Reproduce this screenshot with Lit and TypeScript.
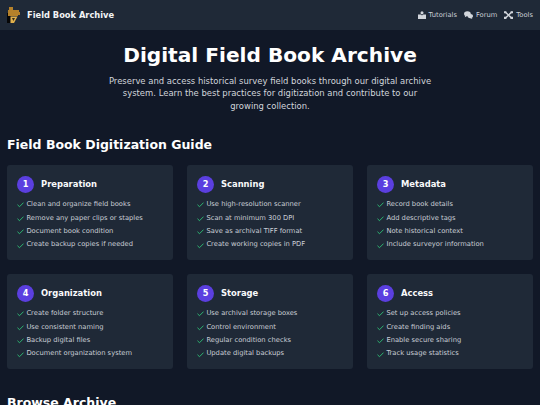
import { LitElement, html, css } from "lit";
import { customElement } from "lit/decorators.js";

const CARDS = [
  ["Preparation", ["Clean and organize field books", "Remove any paper clips or staples", "Document book condition", "Create backup copies if needed"]],
  ["Scanning", ["Use high-resolution scanner", "Scan at minimum 300 DPI", "Save as archival TIFF format", "Create working copies in PDF"]],
  ["Metadata", ["Record book details", "Add descriptive tags", "Note historical context", "Include surveyor information"]],
  ["Organization", ["Create folder structure", "Use consistent naming", "Backup digital files", "Document organization system"]],
  ["Storage", ["Use archival storage boxes", "Control environment", "Regular condition checks", "Update digital backups"]],
  ["Access", ["Set up access policies", "Create finding aids", "Enable secure sharing", "Track usage statistics"]],
] as [string, string[]][];

const check = html`<svg class="check" viewBox="0 0 12 12"><path d="M.8 6.4 4.3 9.8 11.2 2.8" fill="none" stroke="#2fb673" stroke-width="1.7"/></svg>`;

@customElement("app-root")
export class AppRoot extends LitElement {
  static styles = css`
    :host { display: block; height: 405px; overflow: hidden; background: #111827; color: #fff; font-family: "DejaVu Sans", sans-serif; }
    nav { height: 30px; background: #1f2937; display: flex; align-items: center; justify-content: space-between; padding: 0 7px; }
    .brand { display: flex; align-items: center; gap: 6px; font-size: 8.3px; font-weight: 700; color: #f3f4f6; }
    .logo { width: 14px; height: 16px; display: block; }
    .links { display: flex; gap: 7px; font-size: 6.75px; color: #c9ced6; }
    .link { display: flex; align-items: center; gap: 3px; }
    .link svg { width: 9px; height: 8px; display: block; }
    .link.t svg { width: 8px; }
    .hero { padding: 11px 7px 0; text-align: center; }
    h1 { margin: 0; font-size: 20.15px; line-height: 28px; font-weight: 700; }
    .sub { width: 328px; margin: 6px auto 0; font-size: 8.45px; line-height: 12.4px; color: #d1d5db; }
    h2 { margin: 24px 7px 0; font-size: 12.5px; line-height: 18px; font-weight: 700; }
    .grid { margin: 11px 7px 0; display: grid; grid-template-columns: repeat(3, 1fr); gap: 14px; }
    .card { background: #1f2937; border-radius: 3px; padding: 10.5px 10px 0; height: 95px; box-sizing: border-box; }
    .head { display: flex; align-items: center; gap: 7px; margin-bottom: 5.5px; }
    .num { width: 17px; height: 17px; border-radius: 50%; background: #5b3fe0; display: flex; align-items: center; justify-content: center; font-size: 8.25px; font-weight: 700; }
    .title { font-size: 8.4px; font-weight: 700; color: #f9fafb; }
    ul { list-style: none; margin: 0; padding: 0; }
    li { display: flex; align-items: center; gap: 2.4px; font-size: 6.75px; line-height: 13.4px; color: #c9ced6; }
    .check { width: 7px; height: 7px; flex: none; }
    .browse { margin: 25px 7px 0; }
  `;

  render() {
    return html`
      <nav>
        <div class="brand">
          <svg class="logo" viewBox="0 0 14 16">
            <rect x="0" y="6" width="3.5" height="10" fill="#060606" />
            <path d="M2 0h4v3h6v2h1v3h-2v1H1V3h1z" fill="#b5812a" />
            <path d="M3.5 9.5h7L7 16H3.5z" fill="#e0b04c" />
            <path d="M5 11h3l-1.6 3z" fill="#3a2c12" />
          </svg>
          Field Book Archive
        </div>
        <div class="links">
          <span class="link t"><svg viewBox="0 0 8 8"><path d="M0 3.6h3l1 1 1-1h3V8H0z" fill="#d1d5db" /><circle cx="4" cy="1.8" r="1.5" fill="#d1d5db" /></svg>Tutorials</span>
          <span class="link"><svg viewBox="0 0 9 8"><ellipse cx="3.4" cy="2.8" rx="3.4" ry="2.5" fill="#d1d5db" /><path d="M1.2 4.5 .8 6.2 3 5z" fill="#d1d5db" /><ellipse cx="6.3" cy="5.1" rx="2.7" ry="2.1" fill="#d1d5db" /><path d="M7.6 6.5 8.4 8 6 7z" fill="#d1d5db" /></svg>Forum</span>
          <span class="link"><svg viewBox="0 0 9 8"><path d="M1.2 1 7.8 7.2M7.8 1 1.2 7.2" stroke="#d1d5db" stroke-width="1.5" fill="none" /><path d="M0 .2h2.4v2H0zM6.4 5.8H9V8H6.4zM6.6.2H9v2H6.6zM0 5.8h2.4V8H0z" fill="#d1d5db" /></svg>Tools</span>
        </div>
      </nav>
      <section class="hero">
        <h1>Digital Field Book Archive</h1>
        <p class="sub">Preserve and access historical survey field books through our digital archive system. Learn the best practices for digitization and contribute to our growing collection.</p>
      </section>
      <h2>Field Book Digitization Guide</h2>
      <div class="grid">
        ${CARDS.map(([t, items], i) => html`
          <div class="card">
            <div class="head"><span class="num">${i + 1}</span><span class="title">${t}</span></div>
            <ul>${items.map((it) => html`<li>${check}${it}</li>`)}</ul>
          </div>`)}
      </div>
      <h2 class="browse">Browse Archive</h2>
    `;
  }
}
